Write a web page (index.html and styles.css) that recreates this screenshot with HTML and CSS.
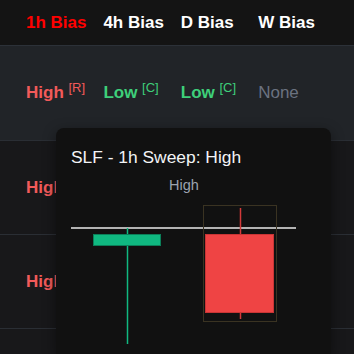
FILE: index.html
```html
<!DOCTYPE html>
<html lang="en">
<head>
    <meta charset="UTF-8">
    <meta name="viewport" content="width=device-width, initial-scale=1.0">
    <title>Bias Table</title>
    <link rel="stylesheet" href="styles.css">
</head>
<body>
    <div id="bias-table">
        <div class="row header">
            <div class="cell active">1h Bias</div>
            <div class="cell">4h Bias</div>
            <div class="cell">D Bias</div>
            <div class="cell">W Bias</div>
        </div>
        <div class="row hovered">
            <div class="cell high">High <sup>[R]</sup></div>
            <div class="cell low">Low <sup>[C]</sup></div>
            <div class="cell low">Low <sup>[C]</sup></div>
            <div class="cell none">None</div>
        </div>
        <div class="row">
            <div class="cell high">High</div>
            <div class="cell"></div>
            <div class="cell"></div>
            <div class="cell"></div>
        </div>
        <div class="row">
            <div class="cell high">High</div>
            <div class="cell"></div>
            <div class="cell"></div>
            <div class="cell"></div>
        </div>
        <div class="row last">
            <div class="cell"></div>
        </div>
    </div>

    <!-- Sweep tooltip -->
    <div id="tooltip">
        <div class="tooltip-title">SLF - 1h Sweep: High</div>
        <div class="chart">
            <div class="chart-label">High</div>
            <svg width="226" height="161" viewBox="0 0 226 161">
                <line x1="0" y1="35" x2="225" y2="35" stroke="#b3b3b3" stroke-width="2"/>
                <!-- previous candle -->
                <line x1="56.5" y1="35" x2="56.5" y2="151" stroke="#10b981" stroke-width="1.5"/>
                <rect x="22.5" y="41.5" width="67" height="11" fill="#10b981" stroke="#0b7f59" stroke-width="1"/>
                <!-- sweep candle -->
                <rect x="132.5" y="12.5" width="73" height="116" fill="none" stroke="#3a3322" stroke-width="1"/>
                <line x1="169.5" y1="15" x2="169.5" y2="126" stroke="#d33a3a" stroke-width="1.5"/>
                <rect x="134.5" y="41.5" width="68" height="78" fill="#ef4444" stroke="#c93535" stroke-width="1"/>
            </svg>
        </div>
    </div>
</body>
</html>
```

FILE: styles.css
```css
/* Bias Table Styles */
body {
    font-family: "Liberation Sans", Arial, sans-serif;
    background-color: #171717;
    margin: 0;
    height: 354px;
    overflow: hidden;
}

#bias-table {
    width: 354px;
}

.row {
    display: grid;
    grid-template-columns: repeat(4, 77.4px);
    padding-left: 26px;
    height: 93px;
    align-items: center;
    border-bottom: 1px solid #2a2e34;
    background-color: #18181a;
}

.row.header {
    height: 45px;
    background-color: #141414;
    border-bottom-color: #2c3138;
}

.row.hovered {
    height: 94px;
    background-color: #212428;
}

.row.last {
    height: 25px;
    border-bottom: none;
}

.cell {
    font-size: 17px;
    font-weight: bold;
    color: #ffffff;
    white-space: nowrap;
}

.cell.active {
    color: #ff0000;
}

.cell.high {
    color: #f25a5a;
}

.cell.low {
    color: #3ecf7a;
}

.cell.none {
    color: #6b7280;
    font-weight: normal;
}

.cell sup {
    font-size: 13px;
    font-weight: normal;
    vertical-align: 6px;
    line-height: 0;
}

#tooltip {
    position: absolute;
    left: 56px;
    top: 128px;
    width: 275px;
    height: 226px;
    box-sizing: border-box;
    padding: 19px 15px 0 15px;
    overflow: hidden;
    background-color: #111111;
    border-radius: 8px 8px 0 0;
    box-shadow: 0 4px 14px rgba(0, 0, 0, 0.45);
}

.tooltip-title {
    font-size: 17.4px;
    line-height: 20px;
    color: #f3f4f6;
}

.chart {
    width: 226px;
    margin-top: 10px;
}

.chart-label {
    text-align: center;
    font-size: 14.5px;
    line-height: 16px;
    color: #9ca3af;
}

.chart svg {
    display: block;
}
```
